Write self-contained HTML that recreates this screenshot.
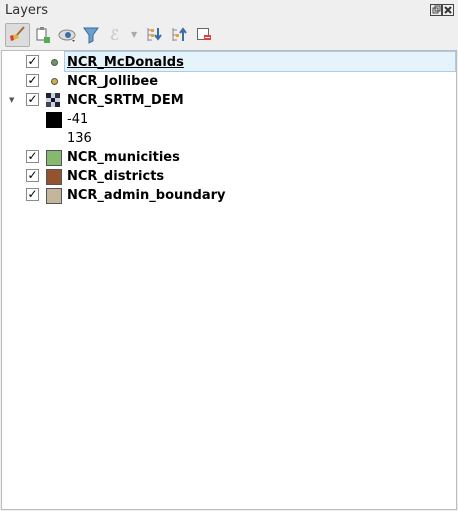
<!DOCTYPE html>
<html><head><style>
body{margin:0;width:458px;height:511px;background:#efefef;font-family:"DejaVu Sans",sans-serif;position:relative;overflow:hidden}
.a{position:absolute}
.title{left:5px;top:3px;font-size:13px;color:#303030}
.tree{left:1px;top:50px;width:454px;height:458px;background:#fff;border:1px solid #bcbcbc}
.row{position:absolute;left:0;height:19px;width:450px;font-size:13px;line-height:19px;color:#000}
.cb{position:absolute;left:24px;top:3px;width:11px;height:11px;border:1px solid #8a8a8a;background:#fff;font-size:12px;line-height:11px;text-align:center;font-weight:bold;color:#000}
.t{position:absolute;left:65px;top:1px;font-weight:bold}
.sw{position:absolute;left:44px;top:3px;width:14px;height:14px;border:1px solid #555}
.dot{position:absolute;left:49px;top:7px;width:5px;height:5px;border-radius:50%;border:1px solid #555}
</style></head><body>
<div class="a title">Layers</div>
<svg class="a" style="left:430px;top:4px" width="24" height="13" viewBox="0 0 24 13">
<rect x="0.5" y="0.5" width="11" height="11" fill="none" stroke="#444"/><rect x="3" y="4" width="5" height="5" fill="none" stroke="#444"/><rect x="5" y="2" width="5" height="5" fill="none" stroke="#444"/>
<rect x="12.5" y="0.5" width="11" height="11" fill="none" stroke="#444"/><path d="M15 3l6 6M21 3l-6 6" stroke="#333" stroke-width="2"/></svg>
<div class="a" style="left:5px;top:23px;width:23px;height:22px;background:#dcdcdc;border:1px solid #b0b0b0;border-radius:2px"></div>
<svg class="a" style="left:8px;top:26px" width="18" height="16"><path d="M2 10l7-2 2 4-8 3z" fill="#e8b040"/><path d="M2 10l3-1 1 5-3 1z" fill="#d04040"/><path d="M9 9l7-8" stroke="#a07030" stroke-width="2"/></svg>
<svg class="a" style="left:35px;top:26px" width="16" height="18"><rect x="2" y="3" width="9" height="11" fill="#fff" stroke="#666"/><rect x="5" y="1" width="4" height="3" fill="#888"/><rect x="9" y="11" width="6" height="6" fill="#5a5"/></svg>
<svg class="a" style="left:58px;top:28px" width="20" height="16"><ellipse cx="9" cy="7" rx="8" ry="5" fill="#ddd" stroke="#888"/><circle cx="10" cy="7" r="3" fill="#3a6ea5"/><path d="M14 12l3 0-1.5 2z" fill="#555"/></svg>
<svg class="a" style="left:83px;top:26px" width="16" height="18"><path d="M1 2h14l-5 7v6l-4 2v-8z" fill="#6aa0d0" stroke="#3a6a9a"/></svg>
<div class="a" style="left:110px;top:26px;font-size:15px;color:#bbb">ℰ</div>
<div class="a" style="left:131px;top:30px;font-size:8px;color:#aaa">▼</div>
<svg class="a" style="left:146px;top:26px" width="18" height="18"><path d="M2 2v13M2 4h4M2 9h4M2 14h4" stroke="#888" fill="none"/><rect x="5" y="3" width="3" height="3" fill="#e8a040"/><rect x="5" y="8" width="3" height="3" fill="#e8a040"/><path d="M12 2v10M9 9l3 4 3-4" stroke="#3a6ea5" stroke-width="2" fill="none"/></svg>
<svg class="a" style="left:171px;top:26px" width="18" height="18"><path d="M2 2v13M2 4h4M2 9h4M2 14h4" stroke="#888" fill="none"/><rect x="5" y="8" width="3" height="3" fill="#e8a040"/><path d="M12 15v-10M9 7l3-4 3 4" stroke="#3a6ea5" stroke-width="2" fill="none"/></svg>
<svg class="a" style="left:196px;top:26px" width="18" height="18"><rect x="1.5" y="2.5" width="11" height="11" fill="#fff" stroke="#666"/><rect x="8" y="9" width="7" height="5" fill="#e04040"/><path d="M9 11.5h5" stroke="#fff"/></svg>
<div class="a tree">
<div class="a" style="left:62px;top:0px;width:390px;height:19px;background:#e5f3fb;border:1px solid #a9cde6"></div>
<div class="row" style="top:1px"><div class="cb">✓</div><div class="dot" style="background:#6a9a5a"></div><div class="t" style="text-decoration:underline">NCR_McDonalds</div></div>
<div class="row" style="top:20px"><div class="cb">✓</div><div class="dot" style="background:#d0b040"></div><div class="t">NCR_Jollibee</div></div>
<div class="row" style="top:39px"><div class="a" style="left:7px;top:1px;font-size:7px;color:#555">▼</div><div class="cb">✓</div>
<svg class="a" style="left:44px;top:3px" width="14" height="14"><rect width="14" height="14" fill="#c8d4e0"/><rect x="0" y="0" width="5" height="5" fill="#223"/><rect x="9" y="0" width="5" height="5" fill="#334"/><rect x="5" y="5" width="4" height="4" fill="#112"/><rect x="0" y="9" width="5" height="5" fill="#445"/><rect x="9" y="9" width="5" height="5" fill="#223"/></svg>
<div class="t">NCR_SRTM_DEM</div></div>
<div class="row" style="top:58px"><div class="sw" style="background:#000;border-color:#000"></div><div class="t" style="font-weight:normal">-41</div></div>
<div class="row" style="top:77px"><div class="t" style="font-weight:normal">136</div></div>
<div class="row" style="top:96px"><div class="cb">✓</div><div class="sw" style="background:#86b870"></div><div class="t">NCR_municities</div></div>
<div class="row" style="top:115px"><div class="cb">✓</div><div class="sw" style="background:#93532f"></div><div class="t">NCR_districts</div></div>
<div class="row" style="top:134px"><div class="cb">✓</div><div class="sw" style="background:#c4b69a"></div><div class="t">NCR_admin_boundary</div></div>
</div>
</body></html>
